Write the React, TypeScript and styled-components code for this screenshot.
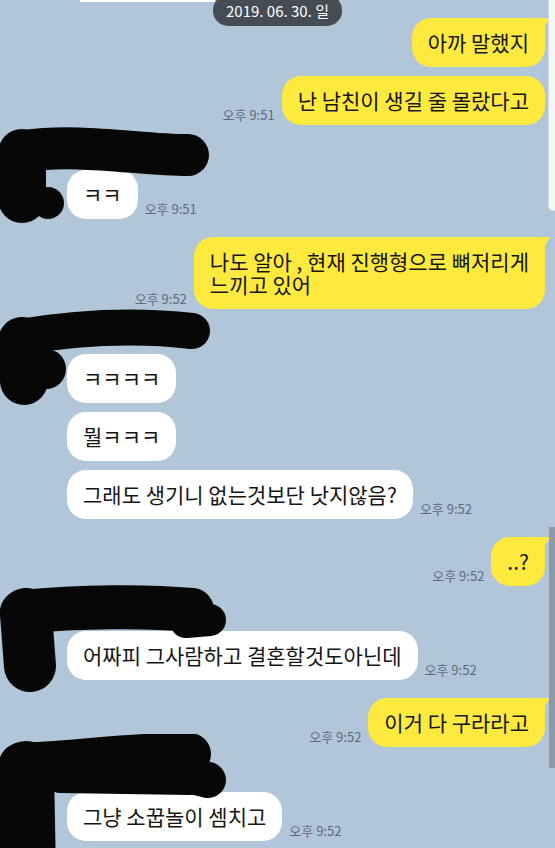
import React from "react";
import styled, { createGlobalStyle, css } from "styled-components";

const Global = createGlobalStyle`
  html, body { margin: 0; padding: 0; }
  body {
    background: #b2c6da;
    font-family: "Noto Sans CJK KR", "Noto Sans", sans-serif;
  }
`;

const Page = styled.div`
  position: relative;
  width: 555px;
  height: 848px;
  overflow: hidden;
  background: #b2c6da;
`;

const Chat = styled.div`
  display: flex;
  flex-direction: column;
  gap: 18px;
  padding: 18px 10px 0 0;
`;

const Group = styled.div<{ $mine?: boolean }>`
  position: relative;
  display: flex;
  flex-direction: column;
  gap: 9px;
  align-items: ${(p) => (p.$mine ? "flex-end" : "flex-start")};
  padding-left: ${(p) => (p.$mine ? "0" : "67px")};
`;

const NameSlot = styled.div`
  height: 18px;
`;

const Row = styled.div<{ $mine?: boolean }>`
  display: flex;
  flex-direction: ${(p) => (p.$mine ? "row-reverse" : "row")};
  align-items: flex-end;
  gap: 7px;
`;

const Bubble = styled.div<{ $mine?: boolean; $tail?: boolean }>`
  position: relative;
  padding: 13px 16px;
  font-size: 21px;
  line-height: 23px;
  color: #151515;
  white-space: pre-line;
  border-radius: 19px;
  background: ${(p) => (p.$mine ? "#fee93f" : "#ffffff")};
  ${(p) =>
    p.$tail &&
    css`
      border-top-right-radius: 6px;
      &::after {
        content: "";
        position: absolute;
        top: 0;
        right: -5px;
        width: 9px;
        height: 10px;
        background: #fee93f;
        clip-path: polygon(0 0, 100% 0, 30% 100%, 0 100%);
      }
    `}
`;

const Time = styled.span`
  font-size: 13px;
  line-height: 16px;
  color: #5a6b7d;
  padding-bottom: 2px;
  white-space: nowrap;
`;

const Scribble = styled.svg<{ $top: number }>`
  position: absolute;
  left: 0;
  top: ${(p) => p.$top}px;
  pointer-events: none;
`;

const DatePill = styled.div`
  position: absolute;
  top: -5px;
  left: 213px;
  width: 129px;
  height: 31px;
  box-sizing: border-box;
  padding-top: 5px;
  border-radius: 15px;
  background: #454c54;
  color: #ffffff;
  font-size: 15px;
  line-height: 22px;
  text-align: center;
`;

const TopStrip = styled.div`
  position: absolute;
  top: 0;
  left: 80px;
  width: 135px;
  height: 2px;
  background: #ffffff;
`;

const SidePanel = styled.div`
  position: absolute;
  top: 0;
  right: 0;
  width: 6px;
  height: 210px;
  background: #f4f6f8;
  border-left: 1px solid #d6dde4;
  border-bottom: 1px solid #d6dde4;
  border-bottom-left-radius: 5px;
`;

const ScrollBar = styled.div`
  position: absolute;
  top: 527px;
  right: 0;
  width: 6px;
  height: 241px;
  background: #8c99a7;
`;

type Msg = { text: string; time?: string };
type G = { mine: boolean; items: Msg[]; scribble?: React.ReactNode };

const INK = "#070707";
const S = { stroke: INK, fill: "none", strokeLinecap: "round" as const, strokeLinejoin: "round" as const };

const scribble1 = (
  <Scribble $top={-18} width="215" height="100" viewBox="0 0 215 100">
    <path d="M24 26 C 80 18, 140 30, 188 30" strokeWidth="42" {...S} />
    <path d="M22 28 L 22 74" strokeWidth="48" {...S} />
    <circle cx="48" cy="78" r="16" fill={INK} />
  </Scribble>
);

const scribble2 = (
  <Scribble $top={-26} width="215" height="110" viewBox="0 0 215 110">
    <path d="M20 36 C 80 26, 140 24, 192 30" strokeWidth="36" {...S} />
    <path d="M22 40 L 24 80" strokeWidth="48" {...S} />
    <circle cx="46" cy="68" r="20" fill={INK} />
  </Scribble>
);

const scribble3 = (
  <Scribble $top={-20} width="245" height="115" viewBox="0 0 245 115">
    <path d="M22 28 C 80 22, 150 22, 192 26" strokeWidth="44" {...S} />
    <path d="M186 38 L 210 36" strokeWidth="32" {...S} />
    <path d="M26 30 L 30 82" strokeWidth="52" {...S} />
  </Scribble>
);

const scribble4 = (
  <Scribble $top={-31} width="240" height="125" viewBox="0 0 240 125">
    <path d="M20 30 C 80 28, 140 18, 190 20" strokeWidth="42" {...S} />
    <path d="M185 40 L 208 46" strokeWidth="36" {...S} />
    <path d="M60 46 L 190 48" strokeWidth="26" {...S} />
    <path d="M26 35 L 28 140" strokeWidth="56" {...S} />
  </Scribble>
);

const groups: G[] = [
  { mine: true, items: [{ text: "아까 말했지" }, { text: "난 남친이 생길 줄 몰랐다고", time: "오후 9:51" }] },
  { mine: false, scribble: scribble1, items: [{ text: "ㅋㅋ", time: "오후 9:51" }] },
  { mine: true, items: [{ text: "나도 알아 , 현재 진행형으로 뼈저리게\n느끼고 있어", time: "오후 9:52" }] },
  {
    mine: false,
    scribble: scribble2,
    items: [{ text: "ㅋㅋㅋㅋ" }, { text: "뭘ㅋㅋㅋ" }, { text: "그래도 생기니 없는것보단 낫지않음?", time: "오후 9:52" }],
  },
  { mine: true, items: [{ text: "..?", time: "오후 9:52" }] },
  { mine: false, scribble: scribble3, items: [{ text: "어짜피 그사람하고 결혼할것도아닌데", time: "오후 9:52" }] },
  { mine: true, items: [{ text: "이거 다 구라라고", time: "오후 9:52" }] },
  { mine: false, scribble: scribble4, items: [{ text: "그냥 소꿉놀이 셈치고", time: "오후 9:52" }] },
];

export default function App() {
  return (
    <Page>
      <Global />
      <Chat>
        {groups.map((g, gi) => (
          <Group key={gi} $mine={g.mine}>
            {!g.mine && <NameSlot />}
            {g.items.map((m, i) => (
              <Row key={i} $mine={g.mine}>
                <Bubble $mine={g.mine} $tail={g.mine && i === 0}>
                  {m.text}
                </Bubble>
                {m.time && <Time>{m.time}</Time>}
              </Row>
            ))}
            {g.scribble}
          </Group>
        ))}
      </Chat>
      <TopStrip />
      <DatePill>2019. 06. 30. 일</DatePill>
      <SidePanel />
      <ScrollBar />
    </Page>
  );
}
